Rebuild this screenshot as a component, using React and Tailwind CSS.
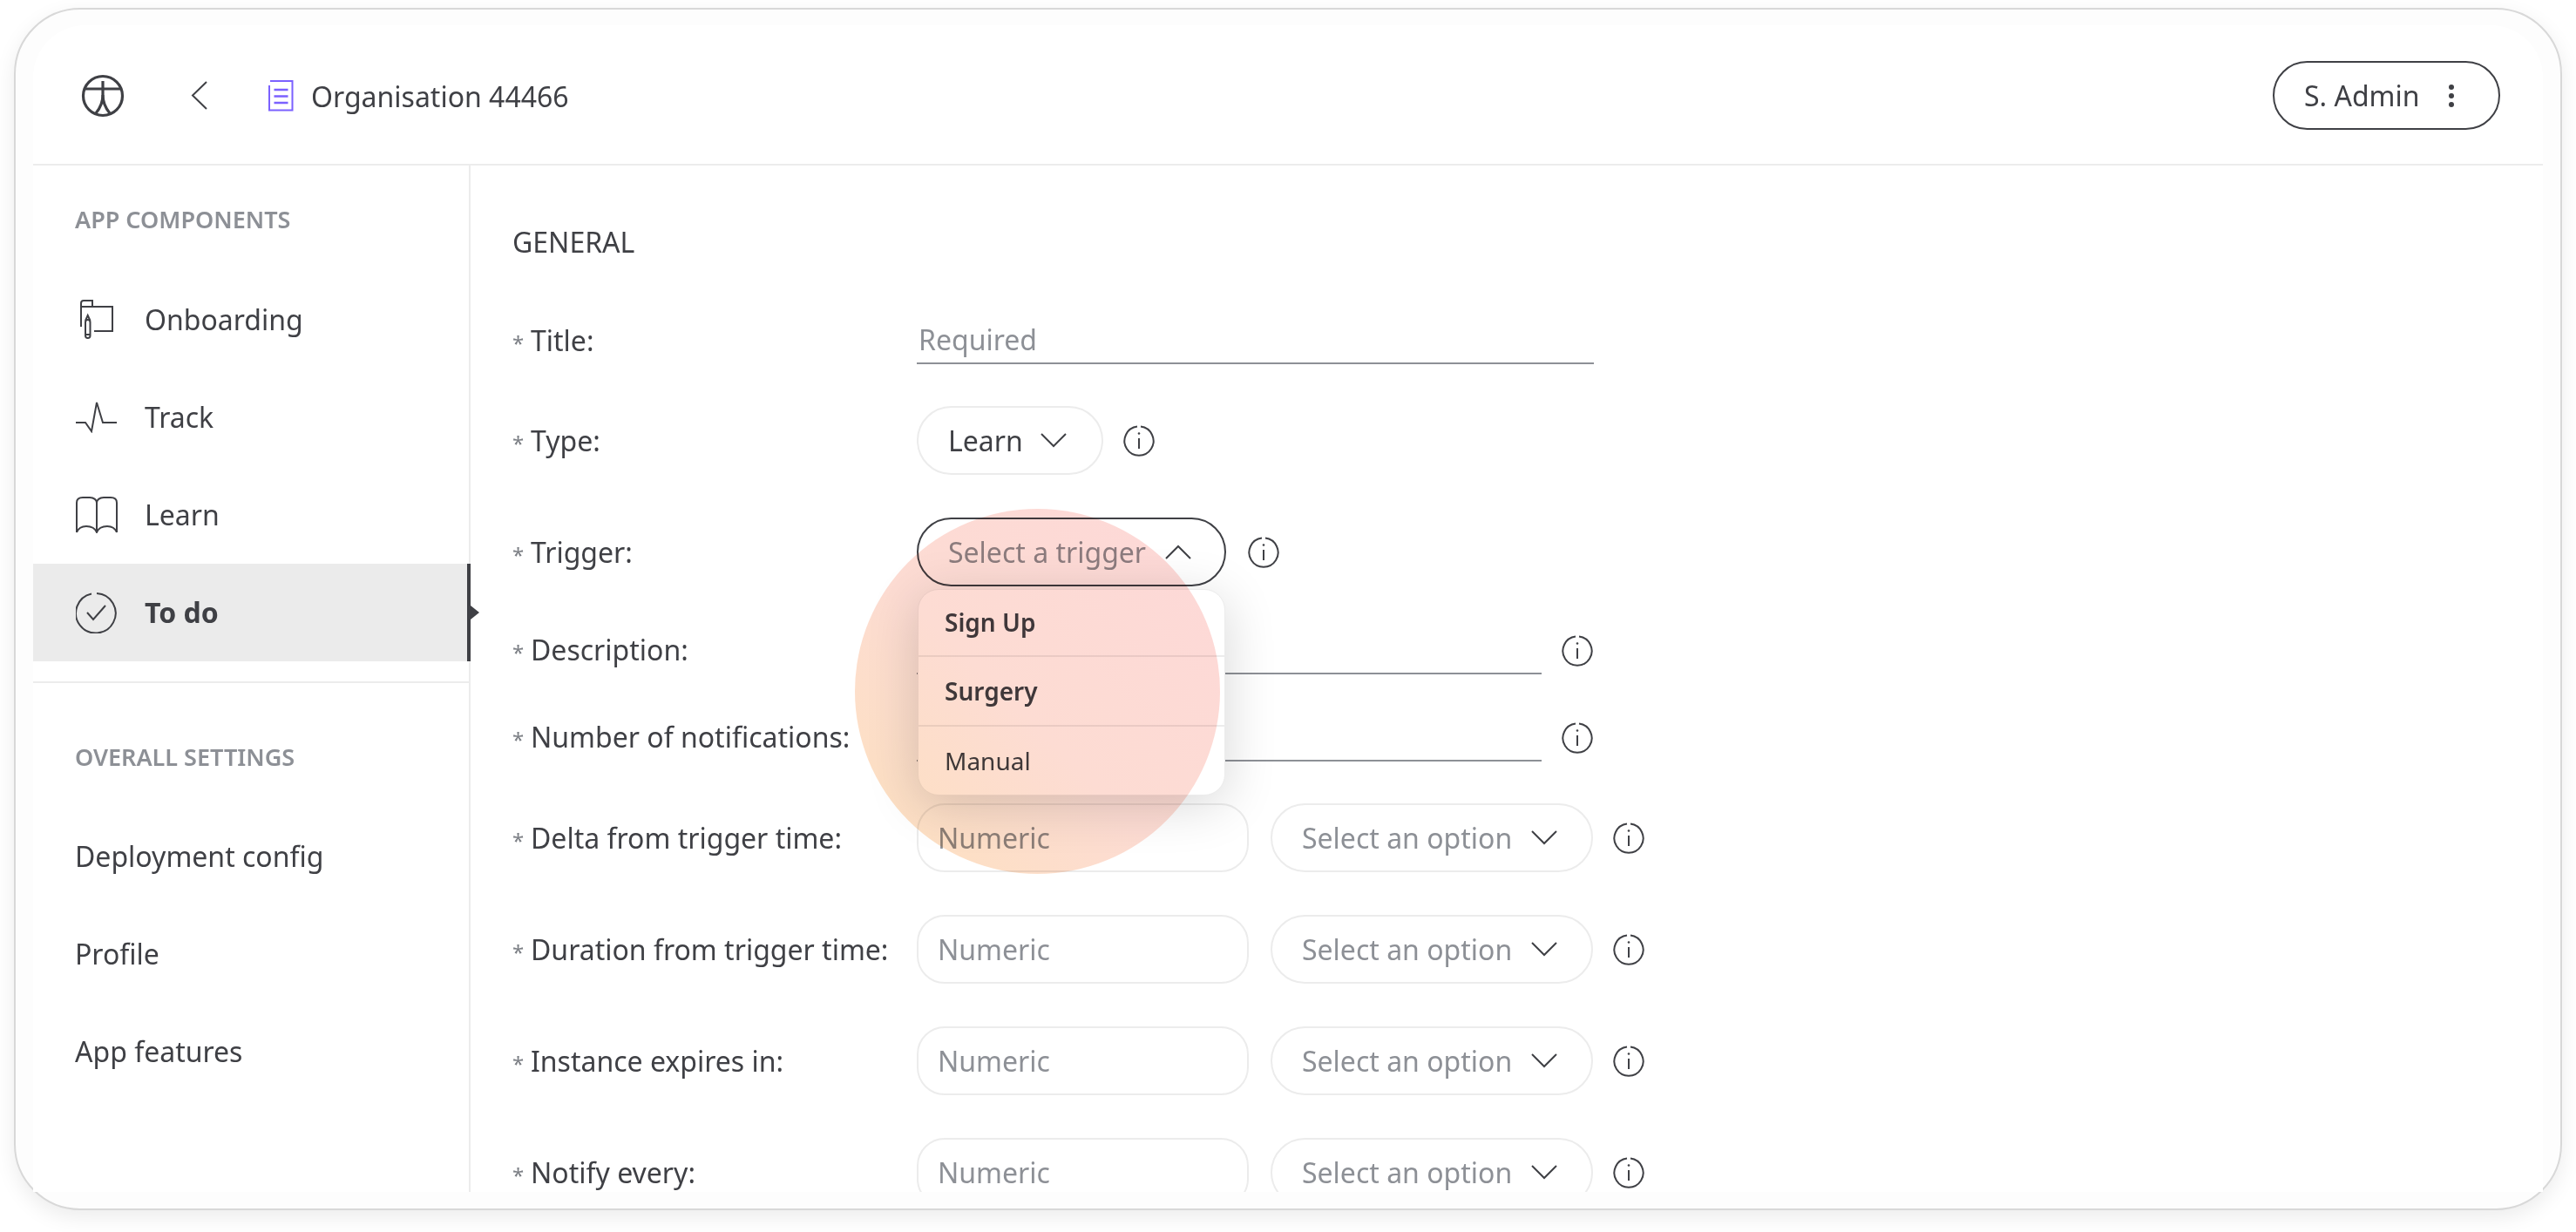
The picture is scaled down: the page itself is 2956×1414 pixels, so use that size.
const ink = '#3f4045';

function Logo() {
  return (
    <svg width="50" height="50" viewBox="0 0 50 50" fill="none" stroke={ink} strokeWidth="3.2">
      <circle cx="25" cy="25" r="22.5" />
      <path d="M3 17h44" />
      <path d="M25 8v16c0 9-3 15-8 21" />
      <path d="M25 24c0 9 3 15 8 21" />
    </svg>
  );
}

function DocIcon() {
  return (
    <svg width="30" height="37" viewBox="0 0 30 37" fill="none" stroke="#7b61ff" strokeWidth="2">
      <path d="M2 7v28.5h26.5V2H3" />
      <path d="M7.500 12h16M7.500 19.500h16M7.500 27h16" strokeWidth="2.400" />
    </svg>
  );
}

function OnboardingIcon() {
  return (
    <svg width="40" height="48" viewBox="0 0 40 48" fill="none" stroke={ink} strokeWidth="2">
      <path d="M2 32V5a3 3 0 0 1 3-3h10v7" />
      <path d="M2 9h36v28H17" />
      <rect x="7" y="24" width="5.500" height="21" rx="2.700" />
      <path d="M7 25l2.700-6 2.800 6M7 41h5.500" />
    </svg>
  );
}

function TrackIcon() {
  return (
    <svg width="48" height="36" viewBox="0 0 48 36" fill="none" stroke={ink} strokeWidth="2">
      <path d="M0 24h11l7 10 6-33 7 23h16" />
    </svg>
  );
}

function BookIcon() {
  return (
    <svg width="48" height="42" viewBox="0 0 48 42" fill="none" stroke={ink} strokeWidth="2">
      <path d="M1 41V7c0-4 3-6 7-6h8c5 0 8 3 8 6v34" />
      <path d="M47 41V7c0-4-3-6-7-6h-8c-5 0-8 3-8 6" />
      <path d="M1 41c2-5 6-7 11-7s10 2 12 7c2-5 7-7 12-7s9 2 11 7" />
    </svg>
  );
}

function TodoIcon() {
  return (
    <svg width="48" height="48" viewBox="0 0 48 48" fill="none" stroke={ink} strokeWidth="2">
      <path d="M18 2.500a22.800 22.800 0 1 0 6-.500" />
      <path d="M13 24l7 8 14-16" />
    </svg>
  );
}

function InfoIcon() {
  return (
    <svg width="36" height="36" viewBox="0 0 36 36" fill="none" stroke={ink} strokeWidth="2" className="shrink-0">
      <path d="M16 1.600a16.600 16.600 0 1 0 4 0" />
      <path d="M18 15v12" />
      <circle cx="18" cy="9.500" r="1.300" fill={ink} stroke="none" />
    </svg>
  );
}

function Chevron({ up }) {
  return (
    <svg width="30" height="17" viewBox="0 0 30 17" fill="none" stroke={ink} strokeWidth="2" className="shrink-0">
      <path d={up ? 'M1 16L15 2l14 14' : 'M1 1l14 14L29 1'} />
    </svg>
  );
}

function Label({ low, children }) {
  return (
    <div className={`w-[464px] shrink-0 text-[32px] leading-[48px] text-[#3f4045] ${low ? 'pt-[4px]' : ''}`}>
      <span className="inline-block w-[21px] text-[24px] text-[#7d8086]">*</span>{children}
    </div>
  );
}

function UnderlineField({ width, height, placeholder }) {
  return (
    <div className={`${width} ${height} border-b-2 border-[#8d9096] text-[32px] leading-[48px] text-[#8d9096] pl-[2px]`}>
      {placeholder}
    </div>
  );
}

function Pill({ width, gap, dark, up, muted, children }) {
  return (
    <div className={`${width} h-[79px] ${gap} rounded-[40px] border-2 ${dark ? 'border-[#3f4045]' : 'border-[#ececec]'} pl-[34px] flex items-center text-[32px] ${muted ? 'text-[#8d9096]' : 'text-[#3f4045]'} bg-white`}>
      <span className="whitespace-nowrap">{children}</span>
      <Chevron up={up} />
    </div>
  );
}

function NumericRow({ label, mb }) {
  return (
    <div className={`flex items-center ${mb}`}>
      <Label low>{label}</Label>
      <div className="w-[381px] h-[79px] rounded-[32px] border-2 border-[#ececec] pl-[22px] flex items-center text-[32px] text-[#8d9096]">
        Numeric
      </div>
      <div className="ml-[25px] mr-[23px]">
        <Pill width="w-[370px]" gap="gap-[22px]" muted>Select an option</Pill>
      </div>
      <InfoIcon />
    </div>
  );
}

const components = [
  { name: 'Onboarding', icon: <OnboardingIcon /> },
  { name: 'Track', icon: <TrackIcon /> },
  { name: 'Learn', icon: <BookIcon /> },
  { name: 'To do', icon: <TodoIcon />, active: true },
];

const settings = ['Deployment config', 'Profile', 'App features'];

export default function App() {
  return (
    <div className="h-screen bg-white overflow-hidden pt-[9px] pl-[16px] pr-[16px] pb-[25px] font-['Noto_Sans',sans-serif] text-[#3f4045]">
      <div className="h-full rounded-[76px] border-2 border-[#d8d8d8] bg-[#fdfdfd] pl-[20px] pr-[20px] pt-[18px] pb-[19px] flex flex-col shadow-[0_8px_24px_rgba(0,0,0,0.08)]">
        <div className="flex-1 min-h-0 bg-white flex flex-col rounded-t-[60px]">
          {/* Header */}
          <header className="h-[161px] shrink-0 border-b-2 border-[#ececec] flex items-center pt-[2px] pl-[55px] pr-[49px]">
            <Logo />
            <svg width="20" height="33" viewBox="0 0 20 33" fill="none" stroke={ink} strokeWidth="2" className="ml-[76px]">
              <path d="M18 1L2 16.500 18 32" />
            </svg>
            <div className="ml-[68px]"><DocIcon /></div>
            <span className="ml-[20px] text-[32px] pt-[2px]">Organisation 44466</span>
            <div className="ml-auto w-[261px] h-[79px] rounded-[40px] border-2 border-[#3f4045] pl-[34px] flex items-center text-[32px]">
              S. Admin
              <span className="ml-[33px] flex flex-col gap-[4px]">
                <i className="block w-[6px] h-[6px] rounded-full bg-[#3f4045]" />
                <i className="block w-[6px] h-[6px] rounded-full bg-[#3f4045]" />
                <i className="block w-[6px] h-[6px] rounded-full bg-[#3f4045]" />
              </span>
            </div>
          </header>

          <div className="flex-1 min-h-0 flex overflow-hidden">
            {/* Sidebar */}
            <aside className="w-[502px] shrink-0 border-r-2 border-[#ececec] relative">
              <div className="pl-[48px] pt-[44px] h-[121px] text-[27px] leading-[36px] font-semibold text-[#8d9096]">APP COMPONENTS</div>
              {components.map(c => (
                <div
                  key={c.name}
                  className={`h-[112px] flex items-center text-[32px] ${c.active ? 'bg-[#ebebeb] font-bold border-r-[4px] border-[#3f4045] w-[502px] relative' : ''}`}
                >
                  <div className="w-[48px] ml-[49px] mr-[31px] shrink-0 flex justify-center">{c.icon}</div>
                  {c.name}
                  {c.active && (
                    <div className="absolute right-[-14px] top-[48px] border-y-[8px] border-y-transparent border-l-[10px] border-l-[#3f4045]" />
                  )}
                </div>
              ))}
              <div className="mt-[23px] border-t-2 border-[#ececec]" />
              <div className="pl-[48px] pt-[67px] h-[143px] text-[27px] leading-[36px] font-semibold text-[#8d9096]">OVERALL SETTINGS</div>
              {settings.map(s => (
                <div key={s} className="h-[112px] flex items-center pl-[48px] text-[32px]">{s}</div>
              ))}
            </aside>

            {/* Form */}
            <main className="flex-1 min-w-0 relative pl-[48px] pt-[64px] overflow-hidden">
              <div className="text-[32px] leading-[48px] mb-[64px]">GENERAL</div>

              <div className="flex items-center mb-[48px]">
                <Label>Title:</Label>
                <UnderlineField width="w-[777px]" height="h-[52px]" placeholder="Required" />
              </div>

              <div className="flex items-center mb-[49px]">
                <Label low>Type:</Label>
                <Pill width="w-[214px]" gap="gap-[20px]">Learn</Pill>
                <div className="ml-[23px]"><InfoIcon /></div>
              </div>

              <div className="flex items-center mb-[47px]">
                <Label low>Trigger:</Label>
                <div className="relative">
                  <Pill width="w-[355px]" gap="gap-[22px]" dark up muted>Select a trigger</Pill>
                  <div className="absolute z-10 left-[1px] top-[82px] w-[353px] bg-white rounded-[24px] border border-[#ececec] shadow-[0_10px_60px_rgba(0,0,0,0.16)] text-[28px]">
                    <div className="h-[77px] flex items-center pl-[30px] pb-[2px] font-semibold border-b-2 border-[#ececec]">Sign Up</div>
                    <div className="h-[80px] flex items-center pl-[30px] font-semibold border-b-2 border-[#ececec]">Surgery</div>
                    <div className="h-[78px] flex items-center pl-[30px]">Manual</div>
                  </div>
                </div>
                <div className="ml-[25px]"><InfoIcon /></div>
              </div>

              <div className="flex items-center mb-[46px]">
                <Label>Description:</Label>
                <UnderlineField width="w-[717px]" height="h-[54px]" />
                <div className="ml-[23px]"><InfoIcon /></div>
              </div>

              <div className="flex items-center mb-[48px]">
                <Label>Number of notifications:</Label>
                <UnderlineField width="w-[717px]" height="h-[54px]" />
                <div className="ml-[23px]"><InfoIcon /></div>
              </div>

              <NumericRow label="Delta from trigger time:" mb="mb-[49px]" />
              <NumericRow label="Duration from trigger time:" mb="mb-[49px]" />
              <NumericRow label="Instance expires in:" mb="mb-[49px]" />
              <NumericRow label="Notify every:" />

              {/* Soft gradient spot over the form */}
              <div className="absolute z-20 left-[441px] top-[394px] w-[419px] h-[419px] rounded-full bg-linear-to-tr from-[#fde1bd] via-[#fddcd3] via-45% to-[#fdd8d8] mix-blend-multiply pointer-events-none" />
            </main>
          </div>
        </div>
      </div>
    </div>
  );
}
